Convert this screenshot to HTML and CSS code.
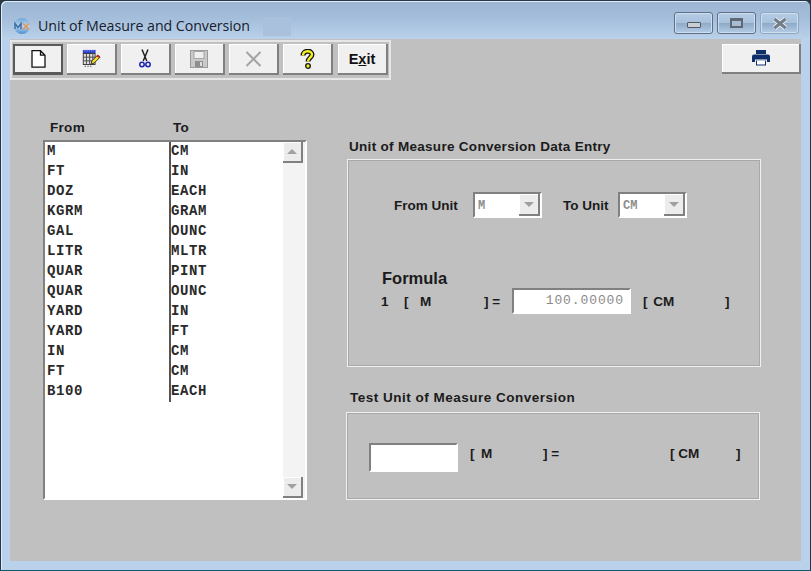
FILE: index.html
```html
<!DOCTYPE html>
<html lang="en">
<head>
<meta charset="utf-8">
<title>Unit of Measure and Conversion</title>
<link rel="stylesheet" href="styles.css">
</head>
<body>
<div class="window">
  <header class="titlebar">
    <svg class="app-icon" width="18" height="18" viewBox="0 0 18 18"><defs><linearGradient id="ball" x1="0" y1="0" x2="0" y2="1"><stop offset="0" stop-color="#6fa6da"/><stop offset=".5" stop-color="#bcd6ee"/><stop offset="1" stop-color="#4a8fd2"/></linearGradient></defs><circle cx="9" cy="9" r="8" fill="url(#ball)"/><path d="M2 12V6.500L5 10.500 8 6.500V12" fill="none" stroke="#3f6ea6" stroke-width="1.500"/><path d="M10 6.500l6 6M16 6.500l-6 6" stroke="#e0985a" stroke-width="1.700"/></svg>
    <span class="title">Unit of Measure and Conversion</span>
    <span class="title-patch"></span>
    <div class="caption-buttons">
      <span class="cap cap-min"><i></i></span>
      <span class="cap cap-max"><i></i></span>
      <span class="cap cap-close"><svg width="16" height="13" viewBox="0 0 16 13"><path d="M2.500 2l11 9M13.500 2l-11 9" stroke="#e6edf4" stroke-width="5"/><path d="M2.500 2l11 9M13.500 2l-11 9" stroke="#737d89" stroke-width="3"/></svg></span>
    </div>
  </header>
  <main class="client">
    <div class="top-row">
      <div class="toolbar">
        <button class="tool tool-default"><svg width="15" height="18" viewBox="0 0 15 18"><path d="M1 .700h8.500l4.500 4.500v12h-13z M9.500 .700v4.500h4.500" fill="#fff" stroke="#111" stroke-width="1.300"/></svg></button>
        <button class="tool"><svg width="20" height="20" viewBox="0 0 22 22"><rect x="2" y="1" width="14" height="4" fill="#2a3fd0"/><path d="M3 2h12" stroke="#aab8ff" stroke-dasharray="1 1"/><rect x="2.500" y="5" width="13" height="12" fill="#ddd" stroke="#333"/><path d="M6 5v12M9.500 5v12M13 5v12M2.500 9h13M2.500 13h13" stroke="#444"/><path d="M4 19h8" stroke="#444" stroke-dasharray="1.500 1.500"/><path d="M11 17l1-4 6-6 3 2-6 6z" fill="#f2dc2e" stroke="#222"/><path d="M17 8l1-2 3 2-1 2z" fill="#c8142a"/></svg></button>
        <button class="tool"><svg width="12" height="19" viewBox="0 0 12 19"><path d="M3 .500l4.800 11.500M9 .500L4.200 12" stroke="#222" stroke-width="1.500"/><circle cx="3" cy="15.500" r="2.200" fill="none" stroke="#1a22b0" stroke-width="1.500"/><circle cx="9" cy="15.500" r="2.200" fill="none" stroke="#1a22b0" stroke-width="1.500"/></svg></button>
        <button class="tool"><svg width="18" height="18" viewBox="0 0 18 18"><rect x="0.500" y="0.500" width="17" height="17" fill="#c9c9c9" stroke="#9a9a9a"/><rect x="4" y="1.500" width="10" height="7" fill="#efefef" stroke="#a5a5a5"/><rect x="5" y="11" width="8" height="6" fill="#8f8f8f"/><rect x="10" y="12" width="2" height="4" fill="#ddd"/></svg></button>
        <button class="tool"><svg width="17" height="16" viewBox="0 0 17 16"><path d="M1.500 1l14 14M15.500 1l-14 14" stroke="#a4a4a4" stroke-width="2"/></svg></button>
        <button class="tool"><svg width="15" height="20" viewBox="0 0 15 20"><path d="M3 6.500C3 1 12 1 12 5.500 12 8.500 8 9 8 12.500" fill="none" stroke="#111" stroke-width="5"/><path d="M3 6.500C3 1 12 1 12 5.500 12 8.500 8 9 8 12.500" fill="none" stroke="#f4ee1e" stroke-width="2.400"/><circle cx="8" cy="17" r="2.300" fill="#f4ee1e" stroke="#111" stroke-width="1.300"/></svg></button>
        <button class="tool tool-exit">E<u>x</u>it</button>
      </div>
      <button class="print-btn"><svg width="18" height="16" viewBox="0 0 18 16"><path d="M4 0h10v4H4z" fill="#0f2f6b"/><path d="M2 4.500h14a2 2 0 0 1 2 2V12h-3V9.500H3V12H0V6.500a2 2 0 0 1 2-2z" fill="#0f2f6b"/><path d="M4 10.500h10V15.500H4z" fill="#0f2f6b"/><path d="M5 10.500h8v4H5z" fill="#fff"/></svg></button>
    </div>
    <div class="content">
      <section class="list-area">
        <div class="list-head"><span class="col-from">From</span><span>To</span></div>
        <div class="listbox">
          <div class="rows">
            <div class="row"><span class="cell-from">M</span><span class="cell-to">CM</span></div>
            <div class="row"><span class="cell-from">FT</span><span class="cell-to">IN</span></div>
            <div class="row"><span class="cell-from">DOZ</span><span class="cell-to">EACH</span></div>
            <div class="row"><span class="cell-from">KGRM</span><span class="cell-to">GRAM</span></div>
            <div class="row"><span class="cell-from">GAL</span><span class="cell-to">OUNC</span></div>
            <div class="row"><span class="cell-from">LITR</span><span class="cell-to">MLTR</span></div>
            <div class="row"><span class="cell-from">QUAR</span><span class="cell-to">PINT</span></div>
            <div class="row"><span class="cell-from">QUAR</span><span class="cell-to">OUNC</span></div>
            <div class="row"><span class="cell-from">YARD</span><span class="cell-to">IN</span></div>
            <div class="row"><span class="cell-from">YARD</span><span class="cell-to">FT</span></div>
            <div class="row"><span class="cell-from">IN</span><span class="cell-to">CM</span></div>
            <div class="row"><span class="cell-from">FT</span><span class="cell-to">CM</span></div>
            <div class="row"><span class="cell-from">B100</span><span class="cell-to">EACH</span></div>
          </div>
          <div class="scrollbar">
            <span class="sb-btn"><i class="tri-up"></i></span>
            <span class="sb-btn"><i class="tri-down"></i></span>
          </div>
        </div>
      </section>
      <section class="forms">
        <h2 class="group-label label-entry">Unit of Measure Conversion Data Entry</h2>
        <div class="group group-entry">
          <div class="unit-row">
            <span class="txt lbl-from">From Unit</span>
            <span class="combo"><span class="combo-val">M</span><span class="combo-btn"><i class="tri-down"></i></span></span>
            <span class="txt lbl-to">To Unit</span>
            <span class="combo"><span class="combo-val">CM</span><span class="combo-btn"><i class="tri-down"></i></span></span>
          </div>
          <div class="formula-title">Formula</div>
          <div class="formula-row txt">
            <span class="w-one">1</span><span class="w-br">[</span><span class="w-unit">M</span><span class="w-eq">] =</span>
            <span class="field field-formula">100.00000</span>
            <span class="w-cm">[ CM</span><span>]</span>
          </div>
        </div>
        <h2 class="group-label label-test">Test Unit of Measure Conversion</h2>
        <div class="group group-test">
          <div class="test-row txt">
            <span class="field field-test"></span>
            <span class="t-br">[</span><span class="t-unit">M</span><span class="t-eq">] =</span>
            <span class="t-cm">[ CM</span><span class="t-end">]</span>
          </div>
        </div>
      </section>
    </div>
  </main>
</div>
</body>
</html>
```

FILE: styles.css
```css
* { box-sizing: border-box; }
html, body { margin: 0; padding: 0; background: #2a3644; }
body { width: 811px; height: 571px; overflow: hidden; font-family: "Liberation Sans", Arial, sans-serif; }
.window {
  width: 811px; height: 571px; display: flex; flex-direction: column;
  border: 1px solid #23364a; border-bottom-color: #0f5a68;
  border-radius: 6px 6px 0 0;
  background: linear-gradient(180deg, #9ab5d2 0, #a5bedb 18px, #b9d1ea 38px);
  box-shadow: inset 1px 1px 0 #e4edf6;
}
.titlebar { height: 38px; flex: none; display: flex; align-items: center; padding: 12px 8px 0 12px; }
.app-icon { flex: none; }
.title { margin-left: 7px; font: 14.200px/20px "Open Sans", sans-serif; letter-spacing: -0.050px; color: #17202c; white-space: nowrap; }
.title-patch { width: 28px; height: 19px; margin-left: 13px; background: #a9c1dc; }
.caption-buttons { margin: -6px 0 0 auto; display: flex; gap: 4px; padding-right: 3px; }
.cap { height: 22px; display: flex; align-items: center; justify-content: center; border: 1px solid #5c6f86; border-radius: 3px;
  background: linear-gradient(180deg, #b5cce4 0, #a8c1dc 50%, #8fabc9 52%, #b4cbe4 100%); box-shadow: inset 0 0 0 1px #cfdff0; }
.cap-min { width: 39px; }
.cap-max { width: 39px; }
.cap-close { width: 39px; border-color: #8ea7c3; }
.cap-min i { width: 14px; height: 6px; background: #c9ced4; border: 1px solid #515b68; border-radius: 1px; margin-top: 4px; }
.cap-max i { width: 13px; height: 10px; background: #a8bdd4; border: 2px solid #5f6873; border-top-width: 3px; }
.client { flex: 1; margin: 0 9px 9px 9px; background: #c0c0c0; display: flex; flex-direction: column; }
.top-row { display: flex; align-items: flex-start; justify-content: space-between; margin-top: 1px; }
.toolbar { width: 381px; height: 40px; display: flex; gap: 4px; padding: 2px 1px; background: #c0c0c0; border: 2px solid #e6e6e6; }
.tool { width: 50px; height: 31px; padding: 0; display: flex; align-items: center; justify-content: center;
  background: #f0f0f0; border: 0; border-right: 2px solid #808080; border-bottom: 2px solid #808080; box-shadow: inset 1px 1px 0 #fff; }
.tool-default { border: 2px solid #5a5a5a; border-bottom-width: 3px; box-shadow: none; }
.tool-exit { font: bold 14.500px "Liberation Sans", sans-serif; color: #111; margin-left: 1px; }
.print-btn { width: 79px; height: 30px; margin: 4px 0 0 0; padding: 0; display: flex; align-items: center; justify-content: center;
  background: #f0f0f0; border: 0; border-right: 2px solid #808080; border-bottom: 2px solid #808080; box-shadow: inset 1px 1px 0 #fff; }
.content { display: flex; align-items: flex-start; }
.list-area { width: 297px; margin-left: 33px; flex: none; }
.list-head { margin-top: 39px; height: 17px; padding-left: 7px; display: flex; font: bold 13.500px/18px "Liberation Sans", sans-serif; letter-spacing: .3px; color: #1b1b1b; }
.col-from { width: 123px; }
.listbox { width: 264px; height: 360px; margin-top: 4px; display: flex; background: #fff; border: 2px solid #fff; border-top-color: #808080; border-left-color: #808080; }
.rows { flex: 1; }
.row { height: 20px; display: flex; font: bold 14px/18px "Liberation Mono", monospace; letter-spacing: .600px; color: #2a2a2a; }
.cell-from { width: 124px; padding-left: 2px; }
.cell-to { border-left: 2px solid #555; }
.scrollbar { width: 22px; display: flex; flex-direction: column; justify-content: space-between; background: #f3f3f3; }
.sb-btn { width: 20px; height: 21px; display: flex; align-items: center; justify-content: center; background: #ececec; border-right: 2px solid #808080; border-bottom: 2px solid #808080; box-shadow: inset 1px 1px 0 #fff; }
.tri-up { width: 0; height: 0; border: 5px solid transparent; border-top: 0; border-bottom: 5px solid #a0a0a0; }
.tri-down { width: 0; height: 0; border: 5px solid transparent; border-bottom: 0; border-top: 5px solid #a0a0a0; }
.forms { flex: none; width: 415px; margin-left: 6px; }
.group-label { margin: 0; font: bold 13.500px/16px "Liberation Sans", sans-serif; color: #1b1b1b; white-space: nowrap; }
.label-entry { margin: 59px 0 0 3px; letter-spacing: .3px; }
.label-test { margin: 23px 0 0 4px; letter-spacing: .5px; }
.group { border: 1px solid #f0f0f0; box-shadow: inset 1px 1px 0 #a8a8a8, inset -1px -1px 0 #a8a8a8; }
.group-entry { width: 414px; height: 208px; margin: 4px 0 0 1px; padding: 32px 0 0 46px; }
.group-test { width: 414px; height: 88px; margin: 6px 0 0 0; padding: 30px 0 0 22px; }
.txt { font: bold 13.500px/18px "Liberation Sans", sans-serif; color: #1b1b1b; white-space: nowrap; }
.unit-row { display: flex; align-items: center; height: 26px; }
.lbl-from { width: 79px; padding-top: 1px; }
.lbl-to { width: 55px; margin-left: 21px; padding-top: 1px; }
.combo { width: 69px; height: 26px; display: flex; justify-content: space-between; background: #fff; border: 2px solid #fff; border-top-color: #808080; border-left-color: #808080; }
.combo-val { font: bold 12px/24px "Liberation Mono", monospace; color: #8d8d8d; padding-left: 3px; }
.combo-btn { width: 21px; display: flex; align-items: center; justify-content: center; background: #ececec; border-right: 2px solid #808080; border-bottom: 2px solid #808080; box-shadow: inset 1px 1px 0 #fff; }
.formula-title { margin: 50px 0 0 -12px; font: bold 16.500px/20px "Liberation Sans", sans-serif; color: #1b1b1b; }
.formula-row { display: flex; align-items: center; margin: 0 0 0 -13px; height: 26px; padding-top: 2px; }
.w-one { width: 23px; }
.w-br { width: 16px; }
.w-unit { width: 64px; }
.w-eq { width: 28px; }
.field { display: block; background: #fff; border: 2px solid #fff; border-top-color: #808080; border-left-color: #808080; }
.field-formula { width: 119px; height: 26px; margin-top: -2px; font: 13px/22px "Liberation Mono", monospace; letter-spacing: .900px; color: #8a8a8a; text-align: right; padding-right: 5px; }
.w-cm { width: 82px; margin-left: 12px; word-spacing: 2px; }
.test-row { display: flex; align-items: flex-start; height: 29px; }
.field-test { width: 89px; height: 29px; }
.t-br { width: 11px; margin: 2px 0 0 12px; }
.t-unit { width: 62px; margin-top: 2px; }
.t-eq { width: 127px; margin-top: 2px; }
.t-cm { width: 66px; margin-top: 2px; }
.t-end { margin-top: 2px; }
```
